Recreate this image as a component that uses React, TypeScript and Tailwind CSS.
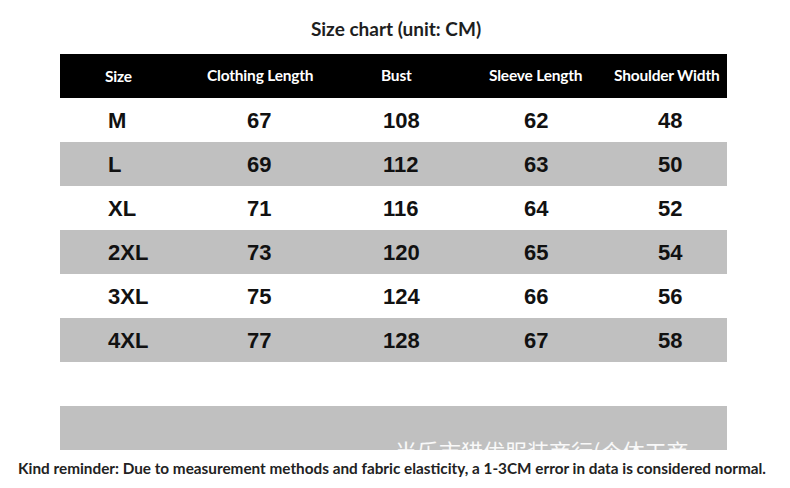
import React from 'react';

const rows = [
  ['M', '67', '108', '62', '48'],
  ['L', '69', '112', '63', '50'],
  ['XL', '71', '116', '64', '52'],
  ['2XL', '73', '120', '65', '54'],
  ['3XL', '75', '124', '66', '56'],
  ['4XL', '77', '128', '67', '58'],
];

const headers = ['Size', 'Clothing Length', 'Bust', 'Sleeve Length', 'Shoulder Width'];

const App: React.FC = () => {
  return (
    <div className="w-[790px] h-[488px] bg-white overflow-hidden flex flex-col items-center font-['Lato','Liberation_Sans',sans-serif]">
      <h1 className="mt-[17px] h-[37px] text-[19px] font-bold text-[#1e1e1e] leading-[24px] pl-[2px]">Size chart (unit: CM)</h1>

      <div className="w-[667px] self-start ml-[60px] flex flex-col">
        {/* header */}
        <div className="h-[44px] bg-black grid grid-cols-[147px_174px_108px_125px_1fr] items-center text-white text-[15.5px] font-bold tracking-[-0.2px]">
          {headers.map((h, i) => (
            <div key={h} className={i === 0 ? 'pl-[45px] pt-[2px]' : 'whitespace-nowrap'}>
              {h}
            </div>
          ))}
        </div>

        {rows.map((r, idx) => (
          <div
            key={r[0]}
            className={`h-[44px] grid grid-cols-[187px_136px_141px_134px_1fr] items-center text-[22px] font-bold text-[#111] font-['Liberation_Sans','Arial',sans-serif] ${
              idx % 2 === 1 ? 'bg-[#c0c0c0]' : 'bg-white'
            }`}
          >
            {r.map((c, i) => (
              <div key={i} className={i === 0 ? 'pl-[48px]' : ''}>
                {c}
              </div>
            ))}
          </div>
        ))}

        <div className="h-[44px]" />
        <div className="h-[44px] bg-[#c0c0c0] relative overflow-hidden">
          <span className="absolute left-[335px] top-[36px] text-[22px] leading-[16px] text-white/90 whitespace-nowrap font-['Noto_Sans_CJK_SC',sans-serif]">
            当乐市猎优服装商行(个体工商
          </span>
        </div>
      </div>

      <p className="mt-[8px] mr-[6px] text-[15.3px] font-bold text-[#222] whitespace-nowrap leading-[20px]">
        Kind reminder: Due to measurement methods and fabric elasticity, a 1-3CM error in data is considered normal.
      </p>
    </div>
  );
};

export default App;
